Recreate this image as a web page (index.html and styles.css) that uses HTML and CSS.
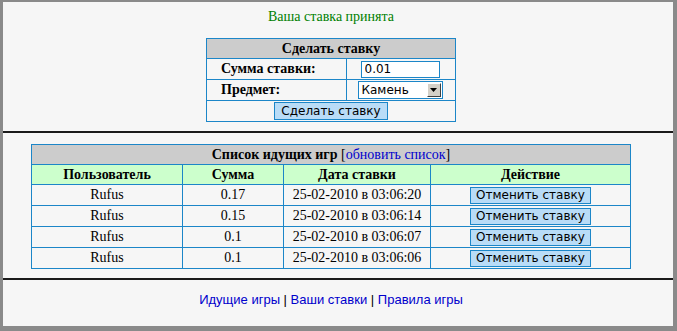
FILE: index.html
```html
<!DOCTYPE html>
<html lang="ru">
<head>
<meta charset="utf-8">
<title>Ставки</title>
<link rel="stylesheet" href="styles.css">
</head>
<body>
<div class="frame">
  <div class="section top">
    <p class="msg">Ваша ставка принята</p>
    <table class="bet">
      <tr><th colspan="2" class="cap">Сделать ставку</th></tr>
      <tr class="r2">
        <td class="lbl">Сумма ставки:</td>
        <td class="ctl"><input class="field" type="text" value="0.01"></td>
      </tr>
      <tr class="r3">
        <td class="lbl">Предмет:</td>
        <td class="ctl">
          <span class="select"><span class="sel-text">Камень</span><span class="sel-btn"><svg width="7" height="4" viewBox="0 0 7 4"><path d="M0 0h7L3.5 4z" fill="#000"/></svg></span></span>
        </td>
      </tr>
      <tr class="r4"><td colspan="2" class="ctr"><button class="btn wide" type="button">Сделать ставку</button></td></tr>
    </table>
  </div>
  <hr class="rule">
  <div class="section">
    <table class="list">
      <tr class="hd"><th colspan="4" class="cap">Список идущих игр <span class="refresh">[<a href="#">обновить список</a>]</span></th></tr>
      <tr class="cols">
        <th class="c1">Пользователь</th><th class="c2">Сумма</th><th class="c3">Дата ставки</th><th class="c4">Действие</th>
      </tr>
      <tr><td>Rufus</td><td>0.17</td><td>25-02-2010 в 03:06:20</td><td><button class="btn" type="button">Отменить ставку</button></td></tr>
      <tr><td>Rufus</td><td>0.15</td><td>25-02-2010 в 03:06:14</td><td><button class="btn" type="button">Отменить ставку</button></td></tr>
      <tr><td>Rufus</td><td>0.1</td><td>25-02-2010 в 03:06:07</td><td><button class="btn" type="button">Отменить ставку</button></td></tr>
      <tr><td>Rufus</td><td>0.1</td><td>25-02-2010 в 03:06:06</td><td><button class="btn" type="button">Отменить ставку</button></td></tr>
    </table>
  </div>
  <hr class="rule">
  <div class="section foot">
    <a href="#">Идущие игры</a> | <a href="#">Ваши ставки</a> | <a href="#">Правила игры</a>
  </div>
</div>
</body>
</html>
```
FILE: styles.css
```css
html, body {
  margin: 0;
  padding: 0;
}
body {
  background: #8a8a8a;
  width: 677px;
  height: 331px;
  overflow: hidden;
  font-family: "Liberation Serif", "Times New Roman", serif;
  font-size: 14px;
  color: #000;
}
.frame {
  margin: 2px 4px 0 3px;
  height: 324px;
  background: #f6f6f6;
  overflow: hidden;
}
.section {
  padding-right: 14px;
}
.msg {
  margin: 0;
  padding-top: 7px;
  height: 16px;
  line-height: 16px;
  text-align: center;
  color: #008000;
}
.bet {
  margin: 13px auto 0;
  width: 250px;
  border-collapse: collapse;
}
.bet td, .bet th, .list td, .list th {
  border: 1px solid #1c86c8;
  padding: 0;
}
.cap {
  background: #cccccc;
  font-weight: bold;
  height: 19px;
  text-align: center;
}
.bet .r2 td { height: 20px; }
.bet .r3 td { height: 20px; }
.bet .r4 td { height: 20px; }
.lbl {
  width: 125px;
  padding-left: 14px !important;
  font-weight: bold;
  text-align: left;
}
.ctl {
  text-align: center;
}
.ctr { text-align: center; }
.field {
  box-sizing: border-box;
  width: 79px;
  height: 17px;
  margin: 0 0 0 -2px;
  padding: 0 3px;
  border: 1px solid #1c86c8;
  background: #fff;
  font-family: "DejaVu Sans", Verdana, sans-serif;
  font-size: 12px;
  vertical-align: middle;
  outline: none;
}
.select {
  display: inline-flex;
  align-items: center;
  box-sizing: border-box;
  width: 85px;
  height: 18px;
  border: 1px solid #1c86c8;
  background: #fff;
  vertical-align: middle;
  margin-left: -2px;
}
.sel-text {
  flex: 1;
  text-align: left;
  padding-left: 3px;
  font-family: "DejaVu Sans", Verdana, sans-serif;
  font-size: 12px;
}
.sel-btn {
  display: flex;
  align-items: center;
  justify-content: center;
  width: 14px;
  height: 14px;
  margin-right: 1px;
  background: #d4d0c8;
  border: 1px solid;
  border-color: #fff #404040 #404040 #fff;
  box-sizing: border-box;
}
.btn {
  box-sizing: border-box;
  height: 17px;
  padding: 0 5px;
  border: 1px solid #1c86c8;
  background: #b9dcf7;
  font-family: "DejaVu Sans", Verdana, sans-serif;
  font-size: 12px;
  line-height: 15px;
  color: #000;
  vertical-align: middle;
}
.btn.wide {
  height: 18px;
  padding: 0 6px;
}
.rule {
  margin: 9px 0 0;
  height: 0;
  border: 0;
  border-top: 2px solid #1a1a1a;
}
.list {
  margin: 11px auto 0;
  width: 600px;
  border-collapse: collapse;
  text-align: center;
}
.list .hd th { height: 19px; }
.list .cols th {
  background: #ccffcc;
  height: 19px;
}
.list td { height: 20px; }
.c1 { width: 150px; }
.c2 { width: 100px; }
.c3 { width: 146px; }
.refresh { font-weight: normal; }
.refresh a, .foot a {
  color: #0000cc;
  text-decoration: none;
}
.foot {
  margin-top: 12px;
  text-align: center;
  font-family: "Liberation Sans", Arial, sans-serif;
  font-size: 13px;
  line-height: 16px;
}
```
